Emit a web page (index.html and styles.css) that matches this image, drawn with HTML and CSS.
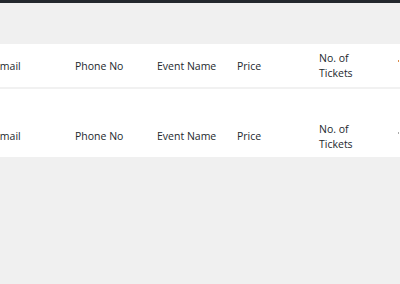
FILE: index.html
```html
<!DOCTYPE html>
<html lang="en">

<head>
    <meta charset="UTF-8">
    <meta name="viewport" content="width=device-width, initial-scale=1.0">
    <title>Bookings</title>
    <link rel="stylesheet" href="styles.css">
</head>

<body>
    <div class="admin-bar"></div>
    <div class="wrap">
        <table class="list-table">
            <colgroup>
                <col class="col-email">
                <col class="col-phone">
                <col class="col-event">
                <col class="col-price">
                <col class="col-tickets">
                <col class="col-more">
            </colgroup>
            <thead>
                <tr>
                    <th>Email</th>
                    <th>Phone No</th>
                    <th>Event Name</th>
                    <th>Price</th>
                    <th>No. of Tickets</th>
                    <th><span class="mark mark-active"></span></th>
                </tr>
            </thead>
            <tbody>
                <tr class="empty-row">
                    <td colspan="6"></td>
                </tr>
            </tbody>
            <tfoot>
                <tr>
                    <th>Email</th>
                    <th>Phone No</th>
                    <th>Event Name</th>
                    <th>Price</th>
                    <th>No. of Tickets</th>
                    <th><span class="mark"></span></th>
                </tr>
            </tfoot>
        </table>
    </div>
</body>

</html>
```

FILE: styles.css
```css
html,
body {
    margin: 0;
    padding: 0;
    overflow: hidden;
    background-color: #f0f0f0;
    font-family: "Open Sans", "Noto Sans", sans-serif;
    color: #23282d;
}

.admin-bar {
    height: 3px;
    background-color: #23282d;
}

.wrap {
    padding-top: 41px;
    margin-left: -16px;
}

.list-table {
    table-layout: fixed;
    border-collapse: collapse;
    width: 500px;
    background-color: #fff;
}

.col-email {
    width: 81px;
}

.col-phone {
    width: 82px;
}

.col-event {
    width: 80px;
}

.col-price {
    width: 82px;
}

.col-tickets {
    width: 79px;
}

.col-more {
    width: 96px;
}

.list-table th {
    padding: 1px 6px 0 10px;
    height: 42px;
    text-align: left;
    font-size: 10.5px;
    font-weight: 500;
    line-height: 15px;
    vertical-align: middle;
}

.list-table thead th {
    border-bottom: 2px solid #f1f1f1;
}

.list-table tfoot th {
    height: 41px;
}

.empty-row td {
    height: 26px;
    padding: 0;
}

.mark {
    display: inline-block;
    width: 1px;
    height: 2px;
    margin-bottom: 6px;
    background-color: #aaa;
}

.mark-active {
    margin-bottom: 8px;
    background-color: #d98b4a;
}
```
